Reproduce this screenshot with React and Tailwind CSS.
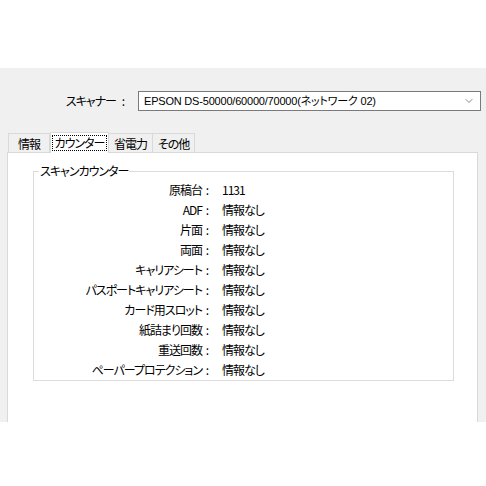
import React from "react";
import { ChevronDown } from "lucide-react";

const rows = [
  { label: "原稿台", value: "1131" },
  { label: "ADF", value: "情報なし" },
  { label: "片面", value: "情報なし" },
  { label: "両面", value: "情報なし" },
  { label: "キャリアシート", value: "情報なし" },
  { label: "パスポートキャリアシート", value: "情報なし" },
  { label: "カード用スロット", value: "情報なし" },
  { label: "紙詰まり回数", value: "情報なし" },
  { label: "重送回数", value: "情報なし" },
  { label: "ペーパープロテクション", value: "情報なし" },
];

const tabs = ["情報", "カウンター", "省電力", "その他"];

export default function App() {
  return (
    <div className="w-[486px] h-[486px] bg-white text-[12px] text-black font-['Noto_Sans_CJK_JP','Noto_Sans',sans-serif] [font-feature-settings:'palt'] tracking-[-1px] overflow-hidden">
      <div className="h-[68px]" />
      <div className="h-[354px] bg-[#f0f0f0] flex flex-col">
        {/* scanner select */}
        <div className="flex items-center mt-[23px] h-[20px]">
          <span className="w-[116px] text-right leading-[20px] whitespace-nowrap">スキャナー</span>
          <span className="w-[14px] text-center">:</span>
          <div className="ml-[8px] w-[343px] h-[20px] bg-white border border-[#7a7a7a] flex items-center justify-between pl-[5px] pr-[5px]">
            <span className="leading-[18px] text-[11px] tracking-[-0.2px] whitespace-nowrap font-['Liberation_Sans','Noto_Sans_CJK_JP',sans-serif]">
              EPSON DS-50000/60000/70000(ネットワーク 02)
            </span>
            <ChevronDown size={12} strokeWidth={1.25} className="text-[#444]" />
          </div>
        </div>

        {/* tabs */}
        <div className="flex items-end mt-[20px] pl-[8px] h-[21px]">
          {tabs.map((t, i) =>
            i === 1 ? (
              <div
                key={t}
                className="h-[21px] w-[59px] bg-white border border-b-0 border-[#d9d9d9] flex items-center justify-center relative z-10 -mb-px whitespace-nowrap"
              >
                <span className="border border-dotted border-black px-[2px] leading-[14px]">{t}</span>
              </div>
            ) : (
              <div
                key={t}
                className={
                  "h-[19px] bg-[#f0f0f0] border border-b-0 border-[#d9d9d9] flex items-center justify-center leading-[17px] whitespace-nowrap " +
                  (i === 0 ? "w-[42px]" : i === 2 ? "w-[44px] border-l-0" : "w-[42px] border-l-0")
                }
              >
                {t}
              </div>
            )
          )}
        </div>

        {/* panel */}
        <div className="flex-1 ml-[7px] mr-[8px] bg-white border border-b-0 border-[#d9d9d9] pt-[10px]">
          <fieldset className="ml-[25px] w-[421px] border border-[#dcdcdc] px-0 pb-0 pt-[1px]">
            <legend className="ml-[5px] px-[1px] leading-[16px]">スキャンカウンター</legend>
            <div className="flex flex-col">
              {rows.map((r) => (
                <div key={r.label} className="flex h-[20px] items-center whitespace-nowrap">
                  <span className="w-[168px] text-right">{r.label}</span>
                  <span className="w-[10px] text-center">:</span>
                  <span className="ml-[10px]">{r.value}</span>
                </div>
              ))}
            </div>
          </fieldset>
        </div>
      </div>
    </div>
  );
}
